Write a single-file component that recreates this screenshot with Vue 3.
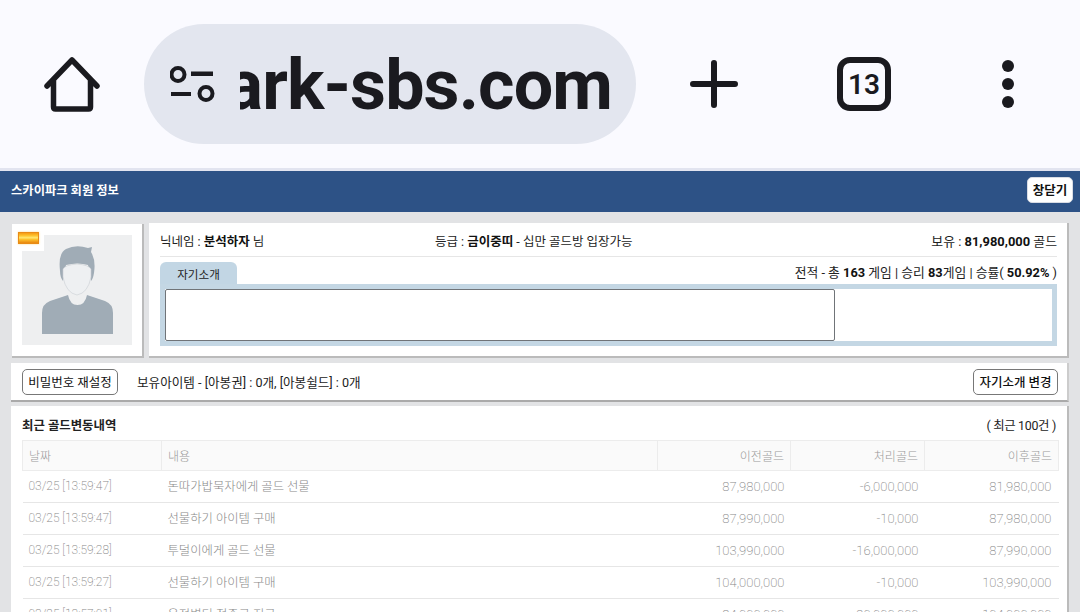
<template>
  <div class="screen">
    <div class="browser-bar">
      <svg class="home-icon" width="56" height="56" viewBox="0 0 56 56">
        <path d="M3 30 L28 4 L53 30 M9.5 24 V51 Q9.5 53 11.5 53 H44.5 Q46.5 53 46.5 51 V24" fill="none" stroke="#1a1a1f" stroke-width="5.5" stroke-linecap="round" stroke-linejoin="round" />
      </svg>
      <div class="url-pill">
        <svg class="tune-icon" width="46" height="38" viewBox="0 0 46 38">
          <circle cx="8" cy="9.5" r="6.5" fill="none" stroke="#1a1a1f" stroke-width="4" />
          <rect x="21" y="6.5" width="22" height="4.5" fill="#1a1a1f" />
          <rect x="1" y="27" width="20" height="4" fill="#1a1a1f" />
          <circle cx="36" cy="28.5" r="6.5" fill="none" stroke="#1a1a1f" stroke-width="4" />
        </svg>
        <div class="url-clip"><span class="url-text">skypark-sbs.com</span></div>
      </div>
      <svg class="plus-icon" width="48" height="48" viewBox="0 0 48 48">
        <path d="M3 24 H45 M24 3 V45" stroke="#1a1a1f" stroke-width="6" stroke-linecap="round" />
      </svg>
      <div class="tab-count">13</div>
      <div class="dots"><i></i><i></i><i></i></div>
    </div>

    <div class="title-bar">
      <span class="title">스카이파크 회원 정보</span>
      <button class="close-btn">창닫기</button>
    </div>

    <div class="content">
      <div class="profile-row">
        <div class="photo-card">
          <div class="photo">
            <svg width="110" height="110" viewBox="0 0 110 110">
              <path d="M20 99 V78 Q20 69 28 66 L46 60 Q48 70 55.5 70 Q63 70 65 60 L83 66 Q91 69 91 78 V99 Z" fill="#a0acb6" />
              <path d="M38 36 Q36 18 44 14 Q54 9 66 13 L70 12 L69 17 Q74 25 72 38 Q71 44 69 46 L66 30 Q56 27 44 30 L41 46 Q38 42 38 36 Z" fill="#a0acb6" />
              <path d="M41 34 Q43 30 55 29 Q67 30 69 34 L69 42 Q66 58 55 60 Q44 58 41 42 Z" fill="#eef0f2" stroke="#c9ced3" stroke-width="0.6" />
            </svg>
          </div>
          <div class="badge-wrap"><div class="grade-badge"></div></div>
        </div>

        <div class="info-card">
          <div class="info-top">
            <span class="info-col">닉네임 : <b>분석하자</b> 님</span>
            <span class="info-col center">등급 : <b>금이중띠</b> - 십만 골드방 입장가능</span>
            <span class="info-col end">보유 : <b>81,980,000</b> 골드</span>
          </div>
          <div class="tab-row">
            <div class="tab">자기소개</div>
            <div class="record">전적 - 총 <b>163</b> 게임 | 승리 <b>83</b>게임 | 승률( <b>50.92%</b> )</div>
          </div>
          <div class="intro-box">
            <div class="intro-input"></div>
          </div>
        </div>
      </div>

      <div class="action-row">
        <button class="outline-btn">비밀번호 재설정</button>
        <span class="items">보유아이템 - [아봉권] : 0개, [아봉쉴드] : 0개</span>
        <button class="outline-btn right">자기소개 변경</button>
      </div>

      <div class="history">
        <div class="history-head">
          <b>최근 골드변동내역</b>
          <span>( 최근 100건 )</span>
        </div>
        <table>
          <colgroup>
            <col class="col-date" />
            <col class="col-text" />
            <col class="col-before" />
            <col class="col-change" />
            <col class="col-after" />
          </colgroup>
          <thead>
            <tr>
              <th>날짜</th>
              <th>내용</th>
              <th class="num">이전골드</th>
              <th class="num">처리골드</th>
              <th class="num">이후골드</th>
            </tr>
          </thead>
          <tbody>
            <tr v-for="row in rows" :key="row.date + row.before">
              <td class="date">{{ row.date }}</td>
              <td>{{ row.text }}</td>
              <td class="num">{{ row.before }}</td>
              <td class="num">{{ row.change }}</td>
              <td class="num">{{ row.after }}</td>
            </tr>
          </tbody>
        </table>
      </div>
    </div>
  </div>
</template>

<script setup>
const rows = [
  { date: '03/25 [13:59:47]', text: '돈따가밥묵자에게 골드 선물', before: '87,980,000', change: '-6,000,000', after: '81,980,000' },
  { date: '03/25 [13:59:47]', text: '선물하기 아이템 구매', before: '87,990,000', change: '-10,000', after: '87,980,000' },
  { date: '03/25 [13:59:28]', text: '투덜이에게 골드 선물', before: '103,990,000', change: '-16,000,000', after: '87,990,000' },
  { date: '03/25 [13:59:27]', text: '선물하기 아이템 구매', before: '104,000,000', change: '-10,000', after: '103,990,000' },
  { date: '03/25 [13:57:01]', text: '운전병티 적중금 지급', before: '84,000,000', change: '20,000,000', after: '104,000,000' }
]
</script>

<style>
html, body {
  margin: 0;
  overflow: hidden;
  background: #e2e3e5;
}
</style>

<style scoped>
.screen {
  width: 1080px;
  height: 612px;
  overflow: hidden;
  font-family: Roboto, "Noto Sans CJK KR", sans-serif;
  font-size: 12.5px;
  color: #222;
  background: #e2e3e5;
}

.browser-bar {
  height: 168px;
  background: #fafaff;
  border-bottom: 3px solid #e2e4f0;
  display: flex;
  align-items: center;
}

.home-icon {
  margin-left: 44px;
  flex: none;
}

.url-pill {
  margin-left: 44px;
  width: 492px;
  height: 120px;
  border-radius: 60px;
  background: #e3e6ef;
  display: flex;
  align-items: center;
  flex: none;
}

.tune-icon {
  margin-left: 26px;
  flex: none;
}

.url-clip {
  margin-left: 24px;
  width: 372px;
  overflow: hidden;
  display: flex;
  justify-content: flex-end;
  flex: none;
}

.url-text {
  font-size: 70px;
  font-weight: 700;
  line-height: 84px;
  letter-spacing: -0.9px;
  margin-top: 2px;
  color: #1a1a1f;
  white-space: nowrap;
  flex: none;
}

.plus-icon {
  margin-left: 54px;
  flex: none;
}

.tab-count {
  margin-left: 99px;
  width: 42px;
  height: 42px;
  border: 6px solid #1a1a1f;
  border-radius: 13px;
  font-size: 28px;
  font-weight: 600;
  line-height: 43px;
  text-align: center;
  color: #1a1a1f;
  flex: none;
}

.dots {
  margin-left: 111px;
  display: flex;
  flex-direction: column;
  gap: 6px;
}

.dots i {
  width: 12px;
  height: 12px;
  border-radius: 50%;
  background: #1a1a1f;
}

.title-bar {
  height: 41px;
  background: #2d5286;
  display: flex;
  align-items: center;
  justify-content: space-between;
  padding: 0 7px 0 11px;
}

.title {
  color: #fff;
  font-size: 12.3px;
  font-weight: 700;
  margin-top: -4px;
}

.close-btn {
  width: 46px;
  height: 26px;
  margin-top: -4px;
  padding: 0;
  border: 1px solid #d8dce4;
  border-radius: 5px;
  background: #fff;
  color: #111;
  font: 700 12.5px Roboto, "Noto Sans CJK KR", sans-serif;
}

.content {
  padding: 11px 11px 0 11px;
}

.profile-row {
  display: flex;
  gap: 5px;
}

.photo-card {
  width: 132px;
  height: 134px;
  margin-top: 1px;
  margin-left: 1px;
  padding: 11px 0 0 10px;
  background: #fff;
  border-right: 2px solid #bbb;
  border-bottom: 2px solid #bbb;
  box-sizing: border-box;
  position: relative;
  flex: none;
}

.photo {
  width: 110px;
  height: 110px;
  background: #eeeff0;
}

.photo svg {
  display: block;
}

.badge-wrap {
  position: absolute;
  left: 0;
  top: 0;
  width: 32px;
  height: 27px;
  background: #fff;
}

.grade-badge {
  position: absolute;
  left: 6px;
  top: 8px;
  width: 21px;
  height: 12px;
  background: linear-gradient(#f59a14 0, #ffc62e 28%, #ffe873 48%, #ffc62e 62%, #e8860f 100%);
  border: 1px solid #e98b14;
  box-shadow: 0 0 2px #ffd98a;
  box-sizing: border-box;
}

.info-card {
  width: 921px;
  height: 135px;
  box-sizing: border-box;
  background: #fff;
  border-right: 2px solid #bbb;
  border-bottom: 2px solid #bbb;
  padding: 0 10px 0 11px;
}

.info-top {
  height: 31px;
  padding-top: 2px;
  border-bottom: 1px solid #e6e6e6;
  display: grid;
  grid-template-columns: 275px 1fr 300px;
  align-items: center;
}

.info-col.end {
  text-align: right;
  font-size: 12.9px;
}

.info-col b,
.record b {
  color: #111;
}

.tab-row {
  display: flex;
  justify-content: space-between;
  align-items: flex-end;
  margin-top: 5px;
  height: 22px;
}

.tab {
  width: 77px;
  height: 22px;
  background: #c2d6e4;
  border-radius: 6px 6px 0 0;
  text-align: center;
  line-height: 26px;
  font-size: 11.6px;
  color: #222;
}

.record {
  font-size: 12.8px;
  line-height: 30px;
  height: 24px;
  margin-bottom: 2px;
}

.intro-box {
  height: 62px;
  box-sizing: border-box;
  border: 5px solid #c4d7e4;
  background: #fff;
}

.intro-input {
  width: 670px;
  height: 52px;
  box-sizing: border-box;
  border: 1px solid #707478;
  border-radius: 2px;
}

.action-row {
  margin-top: 5px;
  height: 39px;
  box-sizing: border-box;
  width: 1058px;
  background: #fff;
  border-bottom: 2px solid #aaa;
  border-right: 2px solid #ccc;
  display: flex;
  align-items: center;
  padding: 0 9px 0 11px;
}

.outline-btn {
  width: 96px;
  height: 26px;
  padding: 0;
  border: 1px solid #777;
  border-radius: 5px;
  background: #fff;
  color: #111;
  font: 400 12.5px Roboto, "Noto Sans CJK KR", sans-serif;
}

.outline-btn.right {
  width: 85px;
  margin-left: auto;
  font-weight: 500;
}

.items {
  margin-left: 19px;
  margin-top: -1px;
  font-size: 12.6px;
}

.history {
  margin-top: 4px;
  width: 1058px;
  box-sizing: border-box;
  background: #fff;
  border-right: 2px solid #bbb;
  padding: 0 10px 0 11px;
}

.history-head {
  height: 30px;
  padding-top: 4px;
  display: flex;
  align-items: center;
  justify-content: space-between;
  font-size: 12.4px;
}

.history-head span {
  margin-right: 1px;
  letter-spacing: -0.3px;
}

table {
  width: 1036px;
  border-collapse: collapse;
  table-layout: fixed;
}

.col-date { width: 139px; }
.col-text { width: 496px; }
.col-before { width: 133px; }
.col-change { width: 134px; }
.col-after { width: 134px; }

th {
  height: 29px;
  background: #fafafa;
  border: 1px solid #ececec;
  padding: 0 6px;
  font-weight: 300;
  font-size: 12px;
  color: #999;
  text-align: left;
}

td {
  height: 30px;
  border-bottom: 1px solid #e6e6e6;
  padding: 0 6px 1px;
  font-weight: 200;
  font-size: 12.35px;
  color: #888;
}

td:last-child {
  padding-right: 7px;
}

td.date {
  font-size: 12px;
  letter-spacing: -0.02px;
}

td.num {
  font-size: 13px;
}

.num {
  text-align: right;
}
</style>
